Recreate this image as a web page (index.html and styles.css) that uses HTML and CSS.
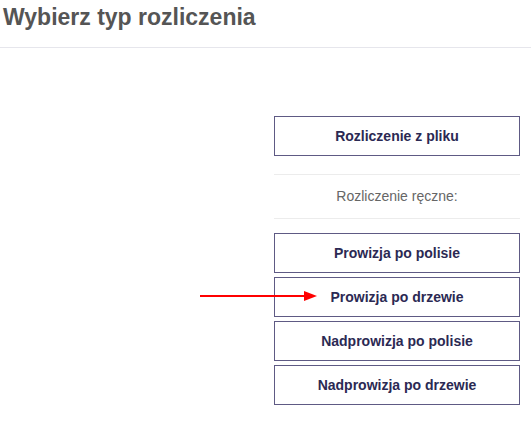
FILE: index.html
```html
<!DOCTYPE html>
<html lang="pl">
<head>
<meta charset="utf-8">
<link rel="stylesheet" href="styles.css">
</head>
<body>
<header class="header">
  <h1 class="title">Wybierz typ rozliczenia</h1>
</header>
<main class="content">
  <div class="column">
    <button class="btn btn-first">Rozliczenie z pliku</button>
    <div class="divider-label">Rozliczenie ręczne:</div>
    <div class="btn-list">
      <button class="btn">Prowizja po polisie</button>
      <button class="btn btn-marked">Prowizja po drzewie
        <svg class="arrow" width="120" height="12" viewBox="0 0 120 12">
          <line x1="0" y1="6" x2="106" y2="6" stroke="#ff0000" stroke-width="2"/>
          <polygon points="104,1 117,6 104,11" fill="#ff0000"/>
        </svg>
      </button>
      <button class="btn">Nadprowizja po polisie</button>
      <button class="btn">Nadprowizja po drzewie</button>
    </div>
  </div>
</main>
</body>
</html>
```
FILE: styles.css
```css
* { box-sizing: border-box; }
html, body { margin: 0; padding: 0; background: #fff; }
body { font-family: "Liberation Sans", Arial, sans-serif; }

.header {
  height: 48px;
  border-bottom: 1px solid #e6e6ec;
  padding: 4px 0 0 3px;
}
.title {
  margin: 0;
  font-size: 23px;
  line-height: normal;
  font-weight: bold;
  color: #555555;
}

.content {
  display: flex;
  justify-content: flex-end;
  padding: 68px 11px 0 0;
}
.column {
  width: 246px;
  display: flex;
  flex-direction: column;
}

.btn {
  position: relative;
  display: block;
  width: 100%;
  height: 40px;
  background: #fff;
  border: 1px solid #5e5a84;
  font-family: inherit;
  font-size: 14px;
  font-weight: bold;
  color: #2b2953;
  text-align: center;
  padding: 0;
}

.divider-label {
  margin-top: 18px;
  border-top: 1px solid #ececec;
  border-bottom: 1px solid #ececec;
  height: 45px;
  line-height: 43px;
  text-align: center;
  font-size: 14px;
  color: #666666;
}

.btn-list {
  margin-top: 14px;
  display: flex;
  flex-direction: column;
  gap: 4px;
}

.arrow {
  position: absolute;
  left: -75px;
  top: 12px;
}
```
